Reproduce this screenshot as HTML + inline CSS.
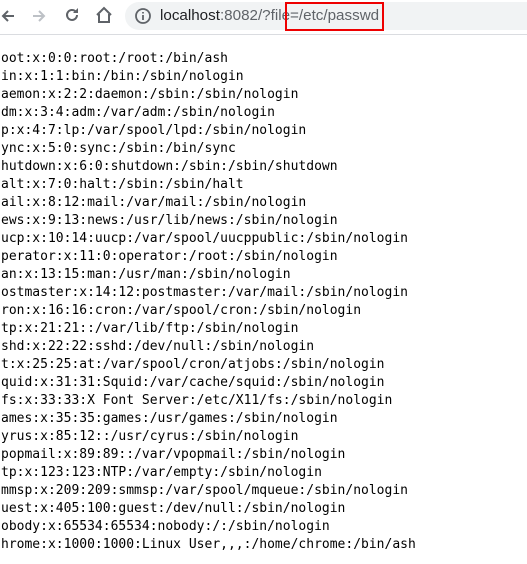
<!DOCTYPE html>
<html><head><style>
body{margin:0;width:527px;height:564px;background:#fff;overflow:hidden;position:relative;font-family:"Liberation Sans",sans-serif}
.bar{position:absolute;left:0;top:0;width:527px;height:34px;background:#fff;border-bottom:1px solid #dadce0}
.url{position:absolute;left:125px;top:2px;width:420px;height:28px;border-radius:14px;background:#f1f3f4}
.txt{position:absolute;left:160px;top:7px;font-size:15.2px;color:#202124;white-space:pre}
.txt span{color:#5f6368}
.red{position:absolute;left:285px;top:2px;width:95px;height:25px;border:2px solid #e00}
pre{position:absolute;left:1px;top:50px;margin:0;font-family:"DejaVu Sans Mono",monospace;font-size:13px;line-height:18px;color:#000}
svg{position:absolute}
</style></head><body>
<div class="bar">
<svg style="left:0;top:6px" width="20" height="20" viewBox="0 0 20 20"><path d="M14 10H3M8 5L3 10l5 5" stroke="#5f6368" stroke-width="2" fill="none"/></svg>
<svg style="left:28px;top:6px" width="20" height="20" viewBox="0 0 20 20"><path d="M5 10h11M11 5l5 5-5 5" stroke="#bdc1c6" stroke-width="2" fill="none"/></svg>
<svg style="left:62px;top:5px" width="20" height="20" viewBox="0 0 20 20"><path d="M15 10a5 5 0 1 1-1.5-3.6" stroke="#5f6368" stroke-width="2" fill="none"/><path d="M16 3v5h-5z" fill="#5f6368"/></svg>
<svg style="left:94px;top:5px" width="20" height="20" viewBox="0 0 20 20"><path d="M3 10L10 3l7 7M5 9v8h10V9" stroke="#5f6368" stroke-width="2" fill="none"/></svg>
<div class="url"></div>
<svg style="left:134px;top:7px" width="18" height="18" viewBox="0 0 18 18"><circle cx="9" cy="9" r="7" stroke="#5f6368" stroke-width="1.8" fill="none"/><path d="M9 8v5M9 5v1.5" stroke="#5f6368" stroke-width="1.8"/></svg>
<div class="txt">localhost<span>:8082/?file=/etc/passwd</span></div>
<div class="red"></div>
</div>
<pre>oot:x:0:0:root:/root:/bin/ash
in:x:1:1:bin:/bin:/sbin/nologin
aemon:x:2:2:daemon:/sbin:/sbin/nologin
dm:x:3:4:adm:/var/adm:/sbin/nologin
p:x:4:7:lp:/var/spool/lpd:/sbin/nologin
ync:x:5:0:sync:/sbin:/bin/sync
hutdown:x:6:0:shutdown:/sbin:/sbin/shutdown
alt:x:7:0:halt:/sbin:/sbin/halt
ail:x:8:12:mail:/var/mail:/sbin/nologin
ews:x:9:13:news:/usr/lib/news:/sbin/nologin
ucp:x:10:14:uucp:/var/spool/uucppublic:/sbin/nologin
perator:x:11:0:operator:/root:/sbin/nologin
an:x:13:15:man:/usr/man:/sbin/nologin
ostmaster:x:14:12:postmaster:/var/mail:/sbin/nologin
ron:x:16:16:cron:/var/spool/cron:/sbin/nologin
tp:x:21:21::/var/lib/ftp:/sbin/nologin
shd:x:22:22:sshd:/dev/null:/sbin/nologin
t:x:25:25:at:/var/spool/cron/atjobs:/sbin/nologin
quid:x:31:31:Squid:/var/cache/squid:/sbin/nologin
fs:x:33:33:X Font Server:/etc/X11/fs:/sbin/nologin
ames:x:35:35:games:/usr/games:/sbin/nologin
yrus:x:85:12::/usr/cyrus:/sbin/nologin
popmail:x:89:89::/var/vpopmail:/sbin/nologin
tp:x:123:123:NTP:/var/empty:/sbin/nologin
mmsp:x:209:209:smmsp:/var/spool/mqueue:/sbin/nologin
uest:x:405:100:guest:/dev/null:/sbin/nologin
obody:x:65534:65534:nobody:/:/sbin/nologin
hrome:x:1000:1000:Linux User,,,:/home/chrome:/bin/ash</pre>
</body></html>
